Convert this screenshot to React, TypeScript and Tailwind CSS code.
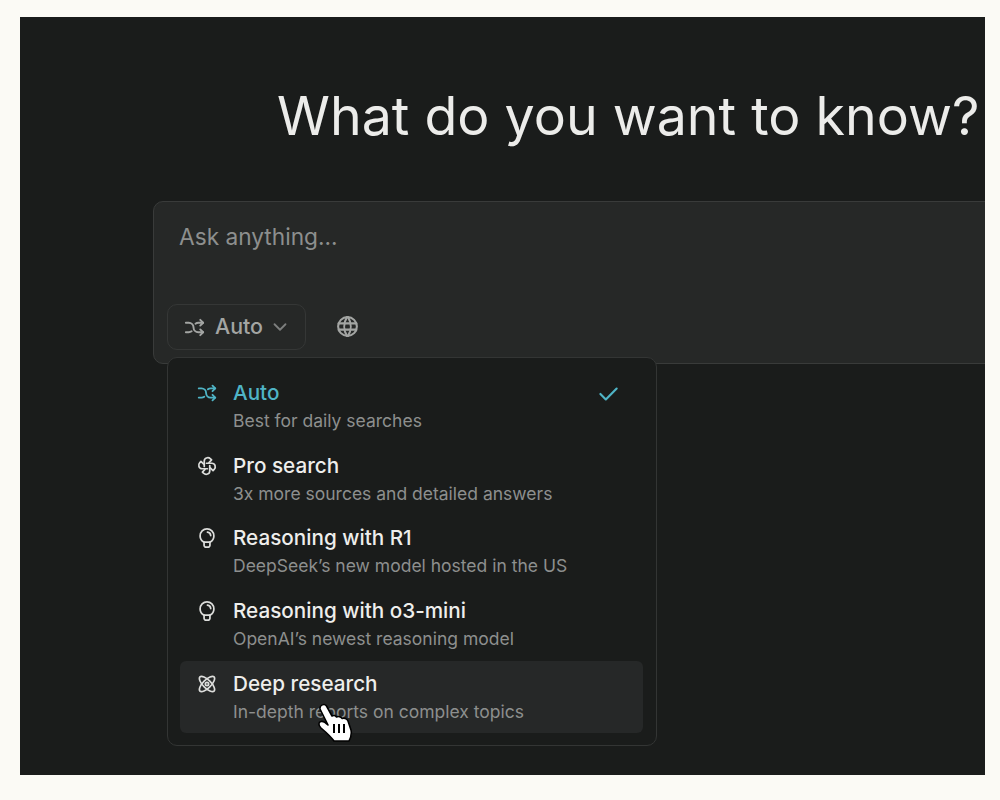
import React from "react";
import { TbArrowsShuffle, TbWorld, TbChevronDown, TbCheck } from "react-icons/tb";

function Bulb({ className }: { className?: string }) {
  return (
    <svg viewBox="0 0 24 24" fill="none" stroke="currentColor" strokeWidth="1.900" strokeLinecap="round" strokeLinejoin="round" className={className}>
      <path d="M8.800 16.500C6.200 15.100 4.500 12.600 4.500 9.700 4.500 5.500 7.800 2 12 2s7.500 3.500 7.500 7.700c0 2.900-1.700 5.400-4.300 6.800z" />
      <path d="M8.800 16.500v3.300a2.200 2.200 0 0 0 2.200 2.200h2a2.200 2.200 0 0 0 2.200-2.200v-3.300" />
      <path d="M12.500 5.600c2 .2 3.400 1.700 3.500 3.700" />
    </svg>
  );
}

function Pinwheel({ className }: { className?: string }) {
  return (
    <svg viewBox="0 0 24 24" fill="none" stroke="currentColor" strokeWidth="1.900" strokeLinecap="round" strokeLinejoin="round" className={className}>
      {[0, 90, 180, 270].map((a) => (
        <path key={a} transform={`rotate(${a} 12 12)`} d="M9 12.500V6.600C9 3.200 13.200 1.800 15.800 4.200L17 5.400 14.200 8.200" />
      ))}
    </svg>
  );
}

function Atom({ className }: { className?: string }) {
  return (
    <svg viewBox="0 0 24 24" fill="none" stroke="currentColor" strokeWidth="2" className={className}>
      <ellipse cx="12" cy="12" rx="12" ry="4.800" transform="rotate(45 12 12)" />
      <ellipse cx="12" cy="12" rx="12" ry="4.800" transform="rotate(-45 12 12)" />
      <circle cx="12" cy="12" r="2" />
    </svg>
  );
}

function HandCursor() {
  return (
    <svg viewBox="0 0 36 40" className="absolute left-[297px] top-[686px] w-[36px] h-[40px]">
      <path
        d="M3 6C2.500 2 7.500 0 9.500 3L15 13c1.500-1 3.500-.5 4.500 1 1.500-1 4.500-.5 5.500 1.500 2-1 5 0 6 2.500l3 9c1 4 0 7-2 11H17c-2-3-6-7-13-13-3-3-2.500-6 0-6.500 2-.5 5 1.500 7 3.500z"
        fill="#ffffff"
        stroke="#000000"
        strokeWidth="1.600"
        strokeLinejoin="round"
      />
      <path d="M17 21v9M22 21v9M27 21v9" stroke="#000000" strokeWidth="2" />
    </svg>
  );
}

type Opt = { title: string; desc: string; icon: React.ReactNode; active?: boolean; hover?: boolean };

const iconCls = "w-[22px] h-[22px]";
const options: Opt[] = [
  { title: "Auto", desc: "Best for daily searches", icon: <TbArrowsShuffle className={iconCls} />, active: true },
  { title: "Pro search", desc: "3x more sources and detailed answers", icon: <Pinwheel className={iconCls} /> },
  { title: "Reasoning with R1", desc: "DeepSeek’s new model hosted in the US", icon: <Bulb className={iconCls} /> },
  { title: "Reasoning with o3-mini", desc: "OpenAI’s newest reasoning model", icon: <Bulb className={iconCls} /> },
  { title: "Deep research", desc: "In-depth reports on complex topics", icon: <Atom className="w-[20px] h-[20px] ml-[1px] mt-[1px]" />, hover: true },
];

function Option({ o }: { o: Opt }) {
  return (
    <div className={`flex h-[72.700px] rounded-md pl-[16px] pr-[22px] pt-[9px] ${o.hover ? "bg-[#262828]" : ""}`}>
      <div className={`w-[37px] pt-[3px] shrink-0 ${o.active ? "text-[#4fb4c6]" : "text-[#dcdddb]"}`}>{o.icon}</div>
      <div className="flex-1">
        <div className={`text-[20.700px] leading-[28px] font-medium ${o.active ? "text-[#4fb4c6]" : "text-[#eeeeec]"}`}>{o.title}</div>
        <div className="text-[17.500px] leading-[26px] mt-[1px] text-[#8d8f8e]">{o.desc}</div>
      </div>
      {o.active && <TbCheck className="w-[26px] h-[26px] mt-[2px] text-[#4fb4c6]" />}
    </div>
  );
}

export default function App() {
  return (
    <div className="h-[800px] bg-[#fbfaf5] pt-[17px] pb-[25px] pl-[20px] pr-[15px] font-['Inter',sans-serif]">
      <div className="relative h-[758px] bg-[#1a1c1b] overflow-hidden pt-[63px] pl-[133px]">
        <h1 className="ml-[124px] text-[53.700px] leading-[72px] font-normal whitespace-nowrap text-[#ececea]">What do you want to know?</h1>
        <div className="mt-[49px] w-[900px] h-[163px] rounded-l-[10px] border border-[#393b3a] bg-[#262827] pl-[13px]">
          <div className="pl-[12px] pt-[19px] text-[22.700px] leading-[32px] text-[#8d8f8e]">Ask anything...</div>
          <div className="mt-[51px] flex items-center">
            <div className="flex items-center h-[46px] w-[139px] rounded-[10px] border border-[#353736] pl-[15px] text-[#a3a5a3]">
              <TbArrowsShuffle className="w-[23px] h-[23px]" />
              <span className="ml-[9px] -mt-[2px] text-[21.400px] font-medium">Auto</span>
              <TbChevronDown className="ml-[6px] w-[22px] h-[22px] text-[#7d7f7e]" />
            </div>
            <TbWorld className="ml-[29px] -mt-[1px] w-[25px] h-[25px] text-[#a3a5a3]" />
          </div>
        </div>
        <div className="absolute left-[147px] top-[340px] w-[490px] h-[389px] rounded-[10px] border border-[#333534] bg-[#1a1c1b] pl-[12px] pr-[13px] pt-[12px]">
          {options.map((o) => (
            <Option key={o.title} o={o} />
          ))}
        </div>
        <HandCursor />
      </div>
    </div>
  );
}
